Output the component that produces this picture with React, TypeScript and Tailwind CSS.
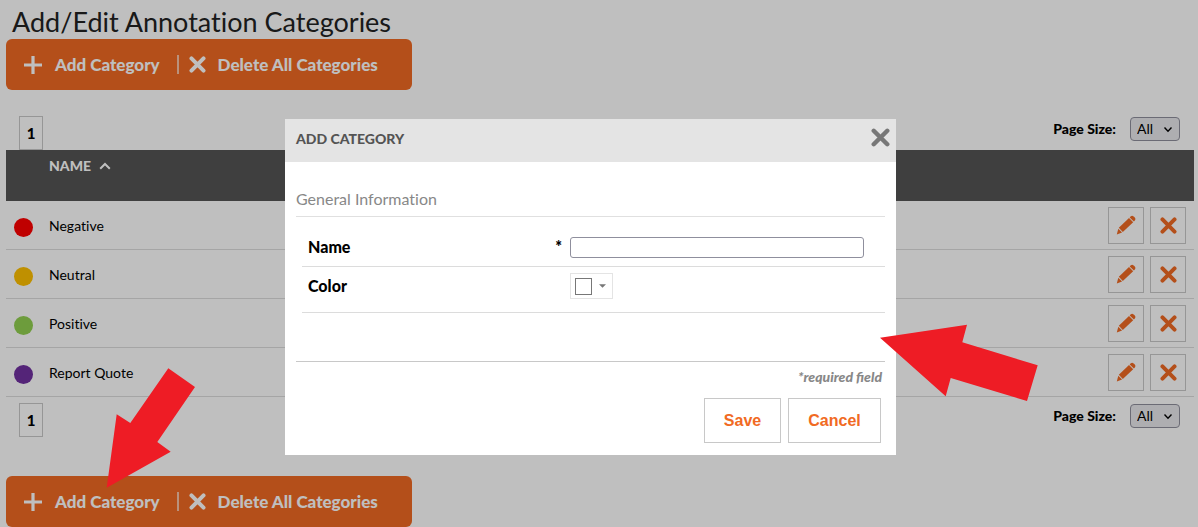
import { useId } from "react";

type Category = { name: string; color: string };

const categories: Category[] = [
  { name: "Negative", color: "bg-[#ff0000]" },
  { name: "Neutral", color: "bg-[#ffc000]" },
  { name: "Positive", color: "bg-[#92d050]" },
  { name: "Report Quote", color: "bg-[#7030a0]" },
];

function CrossIcon({ className }: { className: string }) {
  return (
    <svg viewBox="0 0 18 18" className={className} aria-hidden="true">
      <path d="M2.6 2.6L15.4 15.4M15.4 2.6L2.6 15.4" stroke="currentColor" strokeWidth="4.2" strokeLinecap="round" fill="none" />
    </svg>
  );
}

function PlusIcon() {
  return (
    <svg viewBox="0 0 20 20" className="size-5" aria-hidden="true">
      <path d="M10 1V19M1 10H19" stroke="currentColor" strokeWidth="3.2" fill="none" />
    </svg>
  );
}

function PencilIcon() {
  return (
    <svg viewBox="0 0 20 20" className="size-5" fill="currentColor" aria-hidden="true">
      <path d="M14.6 1.4a2.4 2.4 0 0 1 3 0l1.2 1.2a2.4 2.4 0 0 1 0 3l-.9 1-4.2-4.2z" />
      <path d="M13 3l4.2 4.2L6.8 17 2.8 12.8z" />
      <path d="M2.3 13.7l3.8 3.9L.8 19.4z" />
    </svg>
  );
}

function Toolbar() {
  return (
    <div className="flex h-[51px] w-[406px] max-w-full items-center rounded-md bg-[#f16a23] pl-[17px] text-[17px] font-black text-white">
      <button type="button" className="flex items-center gap-3">
        <PlusIcon />
        Add Category
      </button>
      <span className="ml-[17px] h-[19px] w-0.5 bg-white/60" />
      <button type="button" className="ml-2.5 flex items-center gap-3">
        <CrossIcon className="size-[17px]" />
        Delete All Categories
      </button>
    </div>
  );
}

function Pager({ className }: { className: string }) {
  const id = useId();
  return (
    <div className={`flex justify-between pr-[14px] pl-[13px] ${className}`}>
      <button type="button" className="h-[34px] w-6 border border-[#c8c8c8] text-[15px] font-black">
        1
      </button>
      <div className="flex h-[26px] items-center">
        <label htmlFor={id} className="mr-[14px] text-sm font-black">
          Page Size:
        </label>
        <div className="relative">
          <select
            id={id}
            className="block h-6 w-[50px] appearance-none rounded border border-[#8f8f9d] bg-[#e9e9ed] pl-1.5 text-sm"
          >
            <option>All</option>
          </select>
          <svg viewBox="0 0 10 8" className="pointer-events-none absolute top-[9px] right-[7px] h-2 w-[10px]" aria-hidden="true">
            <path d="M1.5 1.5L5 5.2L8.5 1.5" stroke="#000" strokeWidth="1.4" fill="none" />
          </svg>
        </div>
      </div>
    </div>
  );
}

function CategoryTable() {
  return (
    <table className="w-full border-separate border-spacing-0 text-left">
      <thead>
        <tr className="h-[51px] bg-[#545454] text-white">
          <th className="w-[43px]" aria-label="Color" />
          <th className="pt-1.5 align-top text-sm font-black">
            <button type="button" className="flex items-center gap-2">
              NAME
              <svg viewBox="0 0 12 8" className="h-2 w-3" aria-hidden="true">
                <path d="M1.2 6.8L6 2L10.8 6.8" stroke="currentColor" strokeWidth="2" fill="none" />
              </svg>
            </button>
          </th>
          <th aria-label="Actions" />
        </tr>
      </thead>
      <tbody>
        {categories.map((category) => (
          <tr key={category.name} className="h-[49px]">
            <td className="border-b border-[#dcdcdc] pt-1 pl-2">
              <span className={`block size-[19px] rounded-full ${category.color}`} />
            </td>
            <td className="border-b border-[#dcdcdc] pt-0.5 text-sm">{category.name}</td>
            <td className="border-b border-[#dcdcdc] pr-2">
              <div className="flex justify-end gap-1.5 text-[#f16a23]">
                <button
                  type="button"
                  aria-label={`Edit ${category.name}`}
                  className="flex h-[37px] w-9 items-center justify-center border border-[#c8c8c8]"
                >
                  <PencilIcon />
                </button>
                <button
                  type="button"
                  aria-label={`Delete ${category.name}`}
                  className="flex h-[37px] w-9 items-center justify-center border border-[#c8c8c8]"
                >
                  <CrossIcon className="size-[17px]" />
                </button>
              </div>
            </td>
          </tr>
        ))}
      </tbody>
    </table>
  );
}

function AddCategoryDialog() {
  return (
    <section role="dialog" aria-labelledby="dialog-title" className="relative w-[611px] bg-white">
      <header className="flex h-[43px] items-center justify-between bg-[#e4e4e4] pr-1.5 pl-[11px] text-[#545454]">
        <h2 id="dialog-title" className="pb-1 text-sm font-black">
          ADD CATEGORY
        </h2>
        <button type="button" aria-label="Close" className="mb-1.5 text-[#777]">
          <CrossIcon className="size-[19px]" />
        </button>
      </header>
      <form className="pr-[11px] pb-3 pl-[11px]">
        <h3 className="flex h-[55px] items-end border-b border-[#e0e0e0] pb-[5px] text-base text-[#888]">General Information</h3>
        <div className="border-b border-[#c8c8c8] pb-12 pl-1.5">
          <div className="flex h-[50px] items-end border-b border-[#dcdcdc] pb-2">
            <label htmlFor="category-name" className="flex w-[268px] justify-between pr-2 pl-1.5 text-base leading-[22px] font-black">
              Name <span>*</span>
            </label>
            <input id="category-name" type="text" className="h-[21px] w-[294px] rounded-[3px] border border-[#8f8f9d] px-1" />
          </div>
          <div className="flex h-[46px] items-start border-b border-[#dcdcdc] pt-1.5">
            <label htmlFor="category-color" className="w-[268px] pl-1.5 text-base leading-[26px] font-black">
              Color
            </label>
            <button
              id="category-color"
              type="button"
              className="flex h-[26px] w-[43px] items-center gap-[7px] border border-[#e4e4e4] pl-1"
            >
              <span className="size-[17px] border border-[#777]" />
              <svg viewBox="0 0 8 4" className="h-1 w-[7px]" aria-hidden="true">
                <path d="M0 0H8L4 4Z" fill="#777" />
              </svg>
            </button>
          </div>
        </div>
        <p className="pt-1.5 pr-[3px] text-right text-sm leading-[18px] font-black text-[#888] italic [font-variant-ligatures:normal]">
          *required field
        </p>
        <div className="mt-3 flex justify-end gap-[7px] pr-1 font-['Liberation_Sans',sans-serif] text-base font-bold text-[#f16a23]">
          <button type="submit" className="h-[45px] w-[77px] border border-[#c8c8c8]">
            Save
          </button>
          <button type="button" className="h-[45px] w-[93px] border border-[#c8c8c8]">
            Cancel
          </button>
        </div>
      </form>
      <svg viewBox="880 324 158 78" className="absolute top-[205px] left-[595px] h-[78px] w-[158px]" aria-hidden="true">
        <path d="M880 337.7L967 324.7L962.3 342.3L1037.7 365.3L1027 401L950.7 378L945.7 396.3Z" fill="#ee1c25" />
      </svg>
    </section>
  );
}

export default function App() {
  return (
    <div className="min-h-screen bg-white font-[Lato,sans-serif] text-black [font-variant-ligatures:none]">
      <main className="pr-1 pl-1.5">
        <h1 className="h-[39px] pt-1 pl-1.5 text-[27px] leading-9 text-[#222]">Add/Edit Annotation Categories</h1>
        <Toolbar />
        <Pager className="pt-[26px]" />
        <CategoryTable />
        <Pager className="pt-[6px]" />
        <div className="relative pt-[39px]">
          <Toolbar />
          <svg viewBox="106 368 90 120" className="absolute -top-[69px] left-[100px] z-20 h-[120px] w-[90px]" aria-hidden="true">
            <path d="M106.7 487.7L116.7 414.3L130.3 423L168.3 368.3L195 387L157.3 442L170.7 451.7Z" fill="#ee1c25" />
          </svg>
        </div>
      </main>
      <div className="fixed inset-0 z-10 flex items-start justify-center bg-black/25 pt-[119px] pr-[17px]">
        <AddCategoryDialog />
      </div>
    </div>
  );
}
